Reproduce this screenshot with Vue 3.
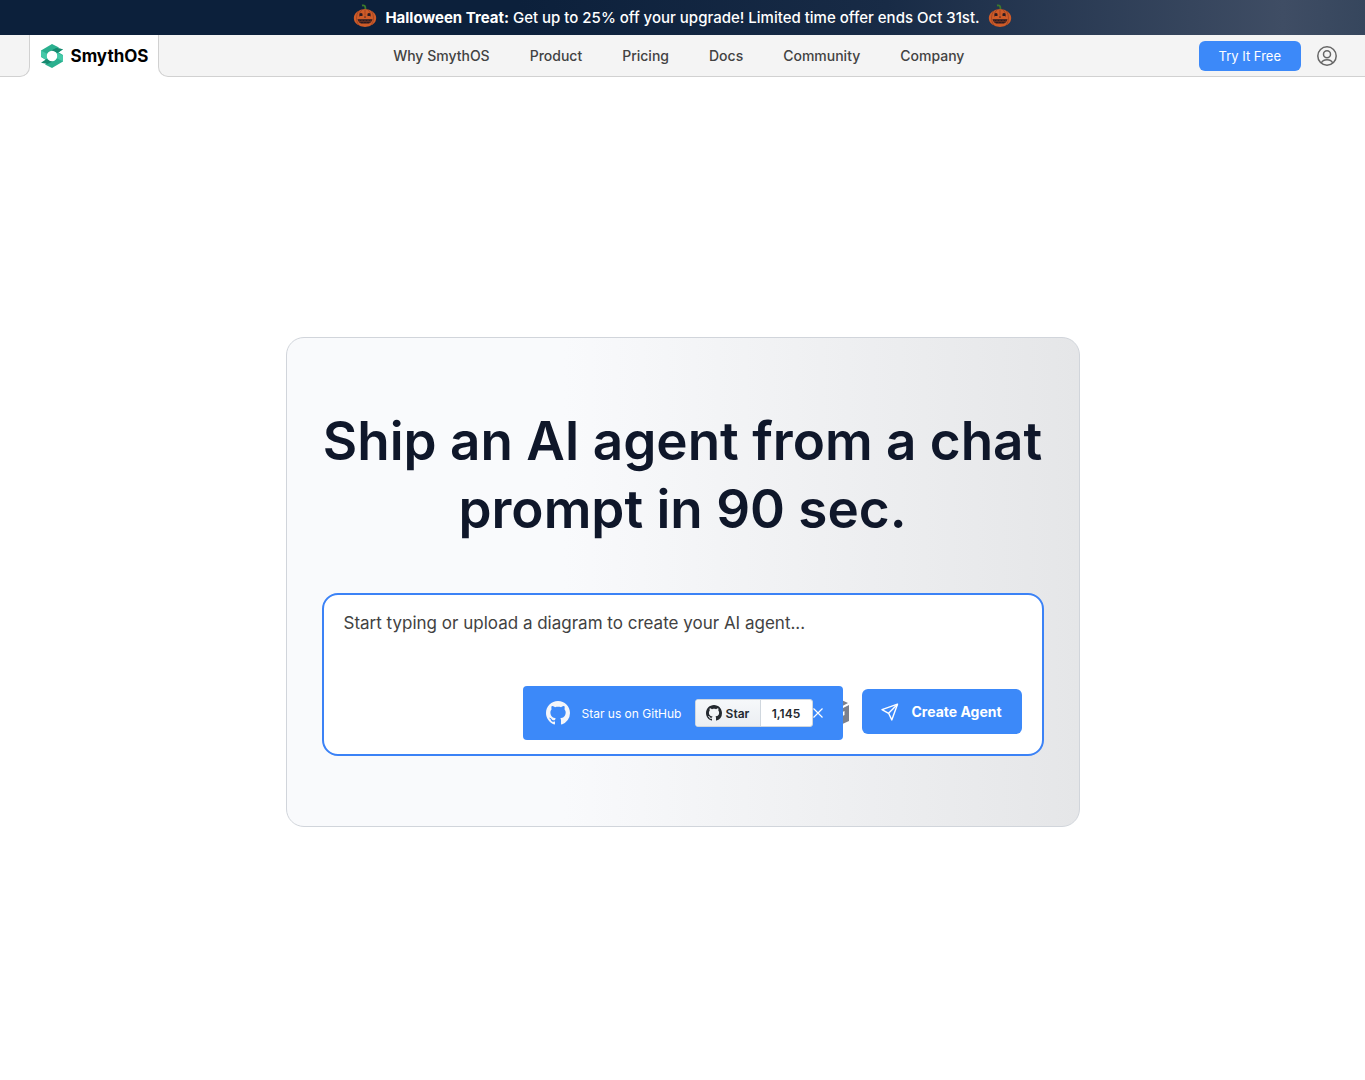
<template>
  <div class="page">
    <div class="promo">
      <PumpkinIcon class="pumpkin" />
      <p class="promo-text"><strong>Halloween Treat:</strong> Get up to 25% off your upgrade! Limited time offer ends Oct 31st.</p>
      <PumpkinIcon class="pumpkin" />
    </div>

    <header class="header">
      <div class="header-edge"></div>
      <a class="brand" href="#">
        <svg class="brand-mark" viewBox="0 0 24 24" aria-hidden="true">
          <path d="M1 6.500 12 0l7 3.500-5 4-7 2.500-1 6-5-3z" fill="#2bb08f" />
          <path d="M1 6.500 7.500 10 7 13.500l5 4-3 .5-8-5.500z" fill="#45c9a8" />
          <path d="M11.500 6.500 16.500 4 23 5.300 17.500 9z" fill="#168a70" />
          <path d="M23 17.500 12 24l-7-3.500 5-4 7-2.500 1-6 5 3z" fill="#2bb08f" />
          <path d="M23 17.500 16.500 14l.5-3.500-3-4 4 2.500 5 2.500z" fill="#45c9a8" />
          <path d="M12.500 17.500 7.500 20 1 18.700 6.500 15z" fill="#168a70" />
          <path d="M16.500 4 23 5.300 17.500 9l-6-2.500z" fill="#168a70" />
          <circle cx="12" cy="12" r="5.200" fill="#fff" />
        </svg>
        <span>SmythOS</span>
      </a>
      <div class="header-main">
        <nav class="nav">
          <a v-for="link in links" :key="link" href="#">{{ link }}</a>
        </nav>
        <button class="btn btn-try" type="button">Try It Free</button>
        <a class="account" href="#" aria-label="Account">
          <svg viewBox="0 0 20 20" fill="none" stroke="#666" stroke-width="1.5">
            <circle cx="10" cy="10" r="9.200" />
            <circle cx="10" cy="8.300" r="3.500" />
            <path d="M4.300 17c.9-2.400 3-3.300 5.700-3.300s4.800.9 5.700 3.300" />
          </svg>
        </a>
      </div>
    </header>

    <main class="main">
      <section class="card">
        <h1 class="title">Ship an AI agent from a chat prompt in 90 sec.</h1>
        <form class="prompt" @submit.prevent>
          <textarea
            v-model="prompt"
            class="prompt-input"
            aria-label="Agent prompt"
            placeholder="Start typing or upload a diagram to create your AI agent..."
          ></textarea>
          <div class="prompt-actions">
            <button class="upload" type="button" aria-label="Upload a diagram">
              <svg viewBox="0 0 26 28" fill="#7b808c">
                <path d="M13 0l11 5-11 6L2 5z" />
                <path d="M1 8l11 6v14L1 22z" />
                <path fill-rule="evenodd" d="M14 12.500 25 7v16l-11 5zM20.500 13l-2 1v4l2-1z" />
              </svg>
            </button>
            <button class="btn btn-create" type="submit">
              <svg viewBox="0 0 18 18" fill="none" stroke="#fff" stroke-width="1.400" stroke-linejoin="round">
                <path d="M16.500 1.200 1 6.600l6.600 3.700 3.200 6.600z" />
                <path d="M16.500 1.200 7.600 10.300" />
              </svg>
              Create Agent
            </button>
          </div>

          <aside v-if="showStar" class="star-bar">
            <svg class="star-logo" viewBox="0 0 16 16" fill="#f4f6fa" aria-hidden="true">
              <path :d="githubPath" />
            </svg>
            <span class="star-label">Star us on GitHub</span>
            <span class="star-widget">
              <a class="star-button" href="#">
                <svg viewBox="0 0 16 16" fill="#24292f" aria-hidden="true"><path :d="githubPath" /></svg>
                Star
              </a>
              <a class="star-count" href="#">1,145</a>
            </span>
            <button class="star-close" type="button" aria-label="Close" @click="showStar = false">
              <svg viewBox="0 0 10 10" stroke="#fff" stroke-width="1.200"><path d="M.5.5l9 9M9.500.5l-9 9" /></svg>
            </button>
          </aside>
        </form>
      </section>
    </main>
  </div>
</template>

<script setup>
import { h, ref } from 'vue'

const links = ['Why SmythOS', 'Product', 'Pricing', 'Docs', 'Community', 'Company']
const prompt = ref('')
const showStar = ref(true)

const githubPath =
  'M8 0C3.58 0 0 3.58 0 8c0 3.54 2.29 6.53 5.47 7.59.4.07.55-.17.55-.38 0-.19-.01-.82-.01-1.49-2.01.37-2.53-.49-2.69-.94-.09-.23-.48-.94-.82-1.13-.28-.15-.68-.52-.01-.53.63-.01 1.08.58 1.23.82.72 1.21 1.87.87 2.33.66.07-.52.28-.87.51-1.07-1.78-.2-3.64-.89-3.64-3.95 0-.87.31-1.59.82-2.15-.08-.2-.36-1.02.08-2.12 0 0 .67-.21 2.2.82.64-.18 1.32-.27 2-.27s1.36.09 2 .27c1.53-1.04 2.2-.82 2.2-.82.44 1.1.16 1.92.08 2.12.51.56.82 1.27.82 2.15 0 3.07-1.87 3.75-3.65 3.95.29.25.54.73.54 1.48 0 1.07-.01 1.93-.01 2.2 0 .21.15.46.55.38A8.01 8.01 0 0 0 16 8c0-4.42-3.58-8-8-8z'

function PumpkinIcon() {
  return h('svg', { viewBox: '0 0 24 24', 'aria-hidden': 'true' }, [
    h('path', { d: 'M9 1.500c2.500-.6 3.500.5 3.500 4', fill: 'none', stroke: '#3c7a2c', 'stroke-width': 1.8 }),
    h('ellipse', { cx: 12, cy: 14, rx: 11.2, ry: 9, fill: '#cf5b28' }),
    h('path', {
      d: 'M5.500 7Q1.500 14 5.500 21M18.500 7q4 7 0 14M9 5.500Q6 8 6.500 13M15 5.500q3 2.500 2.500 7.500M12 5.500v6',
      fill: 'none',
      stroke: '#8a3a20',
      'stroke-width': 0.6
    }),
    h('path', { d: 'M6.500 12V9.800Q8 8.300 9.500 9.800V12zM17.500 12V9.800Q16 8.300 14.500 9.800V12z', fill: '#2b1a20' }),
    h('path', { d: 'M12 12l1 1.600h-2z', fill: '#2b1a20' }),
    h('path', { d: 'M4.500 15.300h15l-1.500 3-2 1.200H8l-2-1.200z', fill: '#2b1a20' }),
    h('path', { d: 'M6 16.800l1.500 1 1.500-1 1.500 1 1.500-1 1.500 1 1.500-1 1.500 1 1.500-1', fill: 'none', stroke: '#9c4626', 'stroke-width': 0.7 })
  ])
}
</script>

<style>
body {
  margin: 0;
  background: #fff;
}
</style>

<style scoped>
.page {
  min-height: 100vh;
  font-family: Inter, "Liberation Sans", sans-serif;
  color: #0f172a;
}

.page * {
  box-sizing: border-box;
}

a {
  color: inherit;
  text-decoration: none;
}

button {
  border: none;
  padding: 0;
  font-family: inherit;
  cursor: pointer;
}

svg {
  display: block;
  flex: none;
}

.promo {
  display: flex;
  align-items: center;
  justify-content: center;
  gap: 8px;
  height: 35px;
  background: linear-gradient(90deg, #0c203b 0%, #0c203b 38%, #182b46 65%, #3f4d64 94%, #36465d 100%);
  color: #fff;
}

.promo-text {
  margin: 0;
  font-size: 15px;
  font-weight: 500;
  line-height: 24px;
}

.promo-text strong {
  font-weight: 700;
}

.pumpkin {
  width: 24px;
  height: 24px;
  margin-bottom: 4px;
}

.header {
  display: flex;
  height: 42px;
}

.header-edge {
  width: 30px;
  border: 1px solid #d1d1d1;
  border-width: 0 1px 1px 0;
  border-bottom-right-radius: 10px;
  background: #f4f4f4;
}

.brand {
  display: flex;
  align-items: center;
  justify-content: center;
  gap: 7px;
  width: 128px;
  font-size: 17px;
  font-weight: 700;
  color: #000;
}

.brand-mark {
  width: 24px;
  height: 24px;
}

.header-main {
  flex: 1;
  display: flex;
  align-items: center;
  padding-right: 28px;
  border: 1px solid #d1d1d1;
  border-width: 0 0 1px 1px;
  border-bottom-left-radius: 10px;
  background: #f4f4f4;
}

.nav {
  flex: 1;
  display: flex;
  justify-content: center;
  gap: 40px;
  font-size: 14px;
  font-weight: 500;
  color: #424242;
}

.btn {
  border-radius: 6px;
  background: #3c89f9;
  color: #fff;
}

.btn-try {
  height: 30px;
  padding: 0 20px;
  font-size: 13px;
}

.account {
  margin-left: 16px;
}

.account svg {
  width: 20px;
  height: 20px;
}

.main {
  display: flex;
  justify-content: center;
  padding: 260px 16px 0;
}

.card {
  width: 100%;
  max-width: 794px;
  padding: 69px 35px 70px;
  border: 1px solid #d1d5db;
  border-radius: 18px;
  background: linear-gradient(90deg, #f9fafc 0%, #f9fafc 35%, #e5e6e8 100%);
}

.title {
  margin: 0 0 50px;
  font-size: 53px;
  font-weight: 600;
  line-height: 68px;
  text-align: center;
}

.prompt {
  position: relative;
  padding: 14px 20px 20px;
  border: 2px solid #3b82f6;
  border-radius: 16px;
  background: #fff;
}

.prompt-input {
  display: block;
  width: 100%;
  height: 80px;
  padding: 0;
  border: none;
  outline: none;
  resize: none;
  background: none;
  font-family: inherit;
  font-size: 17px;
  line-height: 28px;
}

.prompt-input::placeholder {
  color: #424242;
  opacity: 1;
}

.prompt-actions {
  display: flex;
  align-items: center;
  justify-content: flex-end;
  gap: 12px;
}

.upload {
  background: none;
}

.upload svg {
  width: 26px;
  height: 28px;
}

.btn-create {
  display: flex;
  align-items: center;
  justify-content: center;
  gap: 12px;
  width: 160px;
  height: 45px;
  font-size: 14px;
  font-weight: 700;
}

.btn-create svg {
  width: 18px;
  height: 18px;
}

/* floats over the prompt actions until dismissed */
.star-bar {
  position: absolute;
  bottom: 14px;
  left: 50%;
  transform: translateX(-50%);
  display: flex;
  align-items: center;
  width: 320px;
  height: 54px;
  padding: 0 20px 0 23px;
  border-radius: 4px;
  background: #3c89f9;
  color: #fff;
}

.star-logo {
  width: 24px;
  height: 24px;
}

.star-label {
  flex: 1;
  padding-left: 12px;
  font-size: 12px;
}

.star-widget {
  display: flex;
  width: 118px;
  height: 28px;
  border: 1px solid #d0d7de;
  border-radius: 3px;
  overflow: hidden;
  background: #fff;
  font-size: 12px;
  font-weight: 600;
  color: #24292f;
}

.star-button,
.star-count {
  display: flex;
  align-items: center;
  justify-content: center;
}

.star-button {
  gap: 4px;
  width: 65px;
  border-right: 1px solid #d0d7de;
  background: linear-gradient(#f6f8fa, #ebeef2);
}

.star-count {
  flex: 1;
}

.star-button svg {
  width: 16px;
  height: 16px;
}

.star-close {
  background: none;
}

.star-close svg {
  width: 10px;
  height: 10px;
}
</style>
